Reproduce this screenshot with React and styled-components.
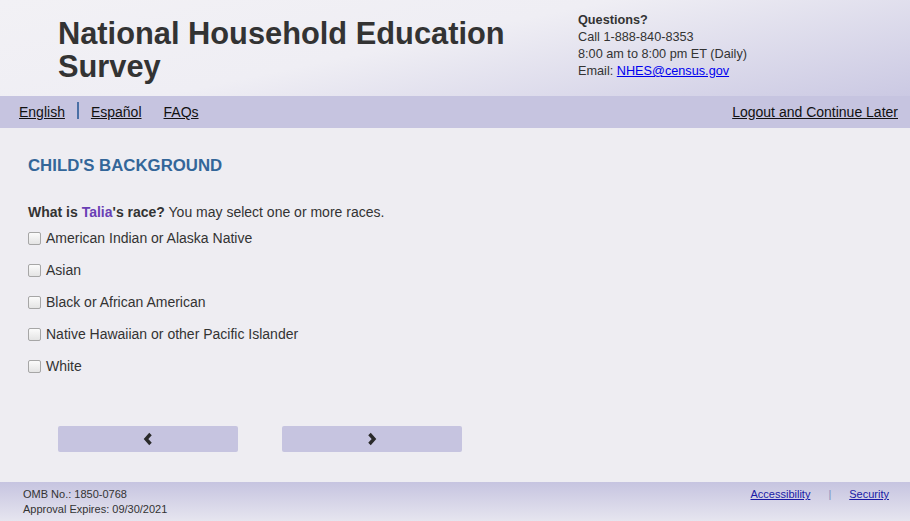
import React from 'react';
import styled, { createGlobalStyle } from 'styled-components';

const GlobalStyle = createGlobalStyle`
  html, body {
    margin: 0;
    padding: 0;
    background: #eeedf2;
    font-family: Arial, "Liberation Sans", Helvetica, sans-serif;
    color: #333;
  }
`;

const Page = styled.div`
  width: 910px;
  height: 521px;
  display: flex;
  flex-direction: column;
  overflow: hidden;
`;

const Header = styled.header`
  height: 96px;
  display: flex;
  justify-content: space-between;
  background: linear-gradient(168deg, #f2f1f5 0%, #efeef4 45%, #cbc9e3 100%);
`;

const Title = styled.h1`
  margin: 17px 0 0 58px;
  width: 480px;
  font-size: 30.8px;
  line-height: 33px;
  font-weight: bold;
  color: #333;
`;

const Contact = styled.div`
  width: 332px;
  padding-top: 12px;
  font-size: 12.7px;
  line-height: 17px;
  color: #333;
`;

const Strong = styled.div`
  font-weight: bold;
`;

const MailLink = styled.a`
  color: #0000ee;
  text-decoration: underline;
`;

const Nav = styled.nav`
  height: 32px;
  background: #c6c4e0;
  display: flex;
  align-items: center;
  padding: 0 12px 0 19px;
  font-size: 14px;
`;

const NavLink = styled.a`
  color: #111;
  text-decoration: underline;
  margin-right: ${p => p.$gap || 0}px;
`;

const Divider = styled.span`
  width: 2px;
  height: 17px;
  background: #4a6fa5;
  margin: -4px 12px 0 12px;
`;

const Spacer = styled.div`
  flex: 1;
`;

const Main = styled.main`
  flex: 1;
  padding: 28px 28px 0 28px;
  display: flex;
  flex-direction: column;
`;

const SectionTitle = styled.h2`
  margin: 0;
  font-size: 16.8px;
  line-height: 20px;
  font-weight: bold;
  color: #336699;
`;

const Question = styled.p`
  margin: 28px 0 0 0;
  font-size: 14px;
  line-height: 16px;
  color: #333;
`;

const Name = styled.span`
  color: #6a3fb5;
`;

const Options = styled.div`
  margin-top: 2px;
  display: flex;
  flex-direction: column;
`;

const Option = styled.label`
  height: 32px;
  display: flex;
  align-items: center;
  font-size: 14px;
  color: #333;
`;

const Box = styled.span`
  width: 11px;
  height: 11px;
  border: 1px solid #a6a6a6;
  border-radius: 2px;
  background: linear-gradient(#fbfbfb, #e4e4e4);
  margin-right: 5px;
`;

const Buttons = styled.div`
  margin: 44px 0 0 30px;
  display: flex;
  gap: 44px;
`;

const NavButton = styled.button`
  width: 180px;
  height: 26px;
  border: none;
  border-radius: 2px;
  background: #c6c4e0;
  display: flex;
  align-items: center;
  justify-content: center;
  padding: 0;
`;

const Footer = styled.footer`
  height: 39px;
  background: linear-gradient(#c6c4e0, #e6e5ef);
  display: flex;
  justify-content: space-between;
  padding: 5px 21px 0 23px;
  box-sizing: border-box;
  font-size: 11px;
  line-height: 15px;
  color: #333;
`;

const FooterLinks = styled.div`
  display: flex;
  align-items: flex-start;
`;

const FooterLink = styled.a`
  color: #1a1aa6;
  text-decoration: underline;
`;

const Pipe = styled.span`
  color: #7a8fbf;
  margin: 0 18px;
`;

const Chevron = ({ dir }) => (
  <svg width="12" height="14" viewBox="0 0 12 14">
    <path
      d={dir === 'left' ? 'M8.5 2 L4 7 L8.5 12' : 'M3.5 2 L8 7 L3.5 12'}
      fill="none"
      stroke="#2a2a2a"
      strokeWidth="3.4"
    />
  </svg>
);

const races = [
  'American Indian or Alaska Native',
  'Asian',
  'Black or African American',
  'Native Hawaiian or other Pacific Islander',
  'White',
];

export default function App() {
  return (
    <>
      <GlobalStyle />
      <Page>
        <Header>
          <Title>National Household Education Survey</Title>
          <Contact>
            <Strong>Questions?</Strong>
            <div>Call 1-888-840-8353</div>
            <div>8:00 am to 8:00 pm ET (Daily)</div>
            <div>
              Email: <MailLink href="#">NHES@census.gov</MailLink>
            </div>
          </Contact>
        </Header>
        <Nav>
          <NavLink href="#">English</NavLink>
          <Divider />
          <NavLink href="#" $gap={22}>Español</NavLink>
          <NavLink href="#">FAQs</NavLink>
          <Spacer />
          <NavLink href="#">Logout and Continue Later</NavLink>
        </Nav>
        <Main>
          <SectionTitle>CHILD'S BACKGROUND</SectionTitle>
          <Question>
            <b>What is <Name>Talia</Name>'s race?</b> You may select one or more races.
          </Question>
          <Options>
            {races.map(r => (
              <Option key={r}>
                <Box />
                {r}
              </Option>
            ))}
          </Options>
          <Buttons>
            <NavButton><Chevron dir="left" /></NavButton>
            <NavButton><Chevron dir="right" /></NavButton>
          </Buttons>
        </Main>
        <Footer>
          <div>
            <div>OMB No.: 1850-0768</div>
            <div>Approval Expires: 09/30/2021</div>
          </div>
          <FooterLinks>
            <FooterLink href="#">Accessibility</FooterLink>
            <Pipe>|</Pipe>
            <FooterLink href="#">Security</FooterLink>
          </FooterLinks>
        </Footer>
      </Page>
    </>
  );
}
